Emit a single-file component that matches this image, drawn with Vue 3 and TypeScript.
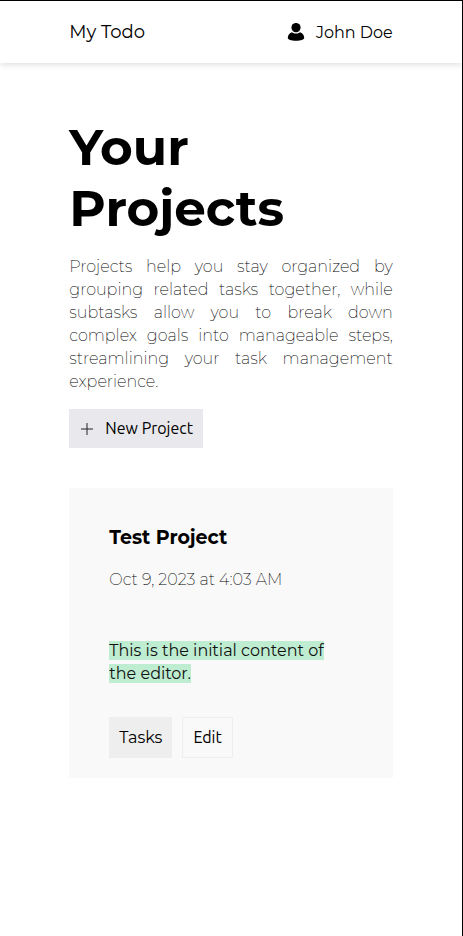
<script setup lang="ts">
interface Project {
  id: number
  title: string
  created: string
  note: string
}

const userName: string = 'John Doe'

const projects: Project[] = [
  {
    id: 1,
    title: 'Test Project',
    created: 'Oct 9, 2023 at 4:03 AM',
    note: 'This is the initial content of the editor.',
  },
]
</script>

<template>
  <div class="page">
    <header class="topbar">
      <a class="brand" href="#">My Todo</a>
      <a class="user" href="#">
        <svg class="user-icon" viewBox="0 0 18 20" aria-hidden="true">
          <ellipse cx="9" cy="5.6" rx="4.6" ry="4.7" />
          <path d="M4.8 10.2C2.2 11.1 0.9 13.2 0.8 15.8C0.8 17.9 4 18.8 9 18.8C14 18.8 17.2 17.9 17.2 15.8C17.1 13.2 15.8 11.1 13.2 10.2C12.1 11.1 10.7 11.6 9 11.6C7.3 11.6 5.9 11.1 4.8 10.2Z" />
        </svg>
        <span>{{ userName }}</span>
      </a>
    </header>

    <main class="content">
      <h1 class="heading">Your Projects</h1>
      <p class="intro">
        Projects help you stay organized by grouping related tasks together, while subtasks allow
        you to break down complex goals into manageable steps, streamlining your task management
        experience.
      </p>
      <button class="new-project" type="button">
        <svg class="plus-icon" viewBox="0 0 16 16" aria-hidden="true">
          <path d="M8 2V14M2 8H14" />
        </svg>
        <span>New Project</span>
      </button>

      <section class="projects">
        <article v-for="project in projects" :key="project.id" class="card">
          <h2 class="card-title">{{ project.title }}</h2>
          <p class="card-date">{{ project.created }}</p>
          <p class="card-note"><mark>{{ project.note }}</mark></p>
          <div class="actions">
            <a class="tasks" href="#">Tasks</a>
            <button class="edit" type="button">Edit</button>
          </div>
        </article>
      </section>
    </main>
  </div>
</template>

<style>
body {
  margin: 0;
  background: #fff;
}
</style>

<style scoped>
.page {
  box-sizing: border-box;
  min-height: 100vh;
  border-top: 1px solid #000;
  border-right: 1px solid #000;
  color: #000;
  font-family: Montserrat, Inter, sans-serif;
  font-size: 16px;
  line-height: 23px;
}

.topbar {
  display: flex;
  align-items: center;
  justify-content: space-between;
  height: 62px;
  padding: 0 15%;
  box-shadow: 0 2px 6px rgba(0, 0, 0, 0.12);
}

.topbar a {
  color: inherit;
  text-decoration: none;
}

.brand {
  font-size: 18px;
}

.user {
  display: flex;
  align-items: center;
  gap: 11px;
}

.user-icon {
  width: 18px;
  height: 20px;
}

.content {
  padding: 54px 15% 40px;
}

.heading {
  margin: 0;
  font-size: 50px;
  font-weight: 700;
  line-height: 61px;
}

.intro {
  margin: 16px 0;
  font-weight: 200;
  text-align: justify;
}

.new-project {
  display: flex;
  align-items: center;
  gap: 10px;
  padding: 10px;
  border: 0;
  background: #e9e8ed;
  color: #000;
  font-family: Ubuntu, "Noto Sans", sans-serif;
  font-size: 16px;
  font-weight: 450;
  line-height: 19px;
}

.plus-icon {
  width: 16px;
  height: 16px;
  fill: none;
  stroke: #222;
}

.projects {
  margin-top: 40px;
}

.card {
  padding: 38px 40px 20px;
  background: #f9f9f9;
}

.card-title {
  margin: 0;
  font-size: 19px;
  font-weight: 700;
}

.card-date {
  margin: 19px 0 48px;
  font-weight: 200;
}

.card-note {
  margin: 0 0 32px;
}

.card-note mark {
  background: #bfedd2;
  color: #111;
}

.actions {
  display: flex;
  gap: 10px;
}

.tasks,
.edit {
  box-sizing: border-box;
  height: 41px;
  padding: 0 10px;
  color: #000;
  font-size: 16px;
  line-height: 41px;
}

.tasks {
  background: #eee;
  text-decoration: none;
}

.edit {
  border: 1px solid #eee;
  background: #f9f9f9;
  font-family: Ubuntu, "Noto Sans", sans-serif;
  font-weight: 450;
  line-height: 39px;
}
</style>
